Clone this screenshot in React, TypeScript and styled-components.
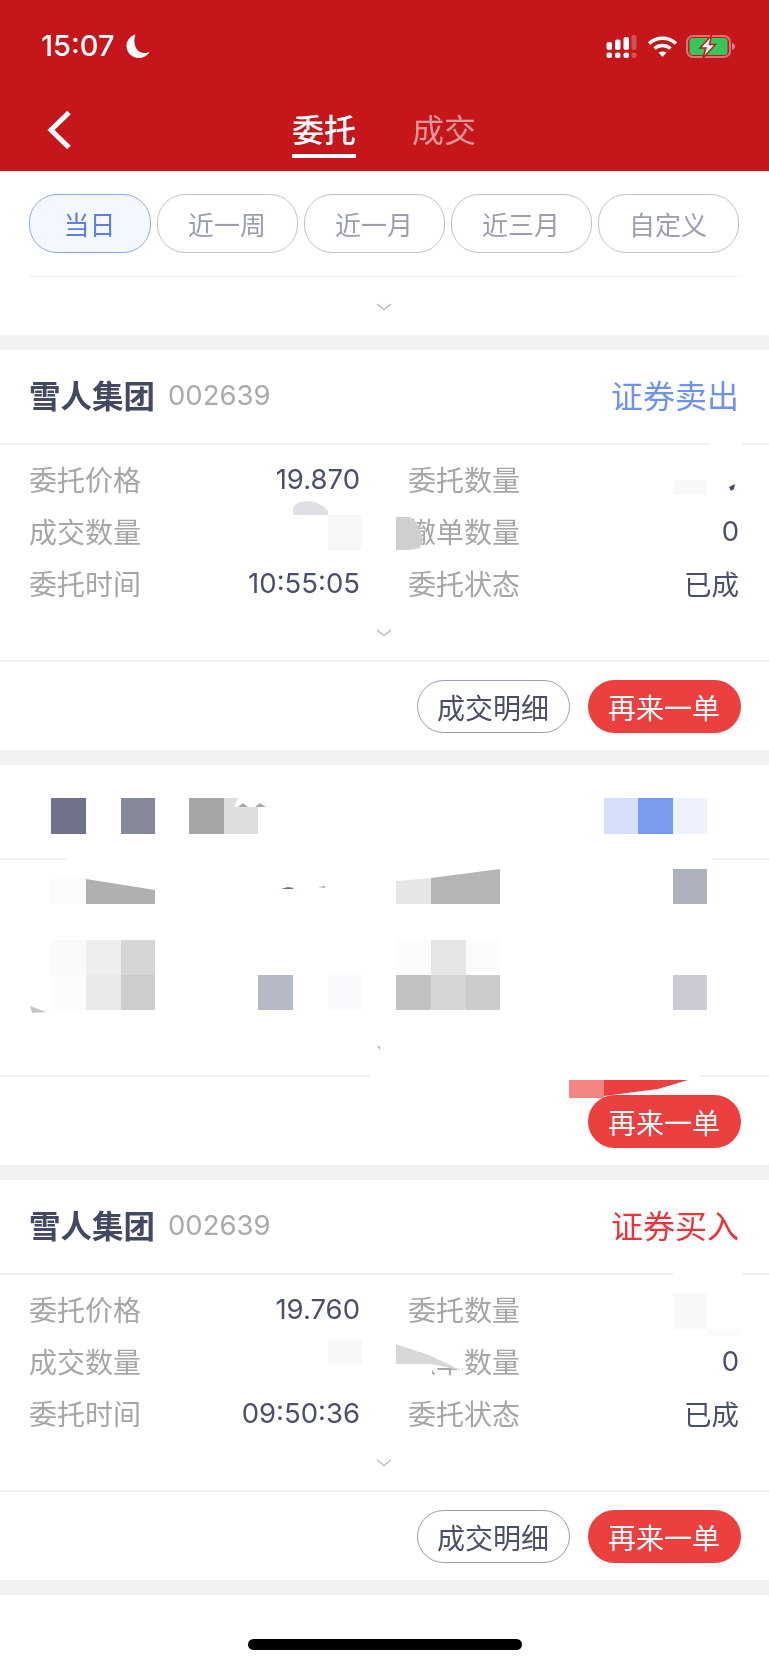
import { ReactNode } from 'react'
import styled, { createGlobalStyle } from 'styled-components'

type Patch = { x: number; y: number; w: number; h: number; c: string; r?: number }
type Shape = { points: string; c: string }

const FONT = `Inter, 'Noto Sans CJK SC', sans-serif`

const GlobalStyle = createGlobalStyle`
  html, body {
    margin: 0;
    padding: 0;
    background: #fff;
  }
  * {
    box-sizing: border-box;
  }
`

function App() {
  return (
    <>
      <GlobalStyle />
      <StPage>
        <StHeader>
          <StStatusBar>
            <StClock>
              15:07
              <MoonIcon />
            </StClock>
            <StStatusIcons>
              <SignalIcon />
              <WifiIcon />
              <BatteryIcon />
            </StStatusIcons>
          </StStatusBar>
          <StNav>
            <StBack>
              <svg width="26" height="40" viewBox="0 0 26 40" fill="none">
                <path d="M22 2.500 L4 20 L22 37.500" stroke="#fff" strokeWidth="5" />
              </svg>
            </StBack>
            <StTab $active>委托</StTab>
            <StTab>成交</StTab>
          </StNav>
        </StHeader>

        <StFilter>
          <StPills>
            <StPill $active $width={122}>当日</StPill>
            <StPill>近一周</StPill>
            <StPill>近一月</StPill>
            <StPill>近三月</StPill>
            <StPill>自定义</StPill>
          </StPills>
          <StFilterLine />
          <StFilterChevron>
            <Chevron />
          </StFilterChevron>
        </StFilter>

        <OrderCard
          top={350}
          type="证券卖出"
          typeColor="#6f93e8"
          price="19.870"
          time="10:55:05"
          patches={card1Patches}
          shapes={card1Shapes}
        />
        <OrderCard top={764} blank patches={card2Patches} shapes={card2Shapes} />
        <OrderCard
          top={1179}
          type="证券买入"
          typeColor="#e9343c"
          price="19.760"
          time="09:50:36"
          patches={card3Patches}
          shapes={card3Shapes}
        />

        <StHomeArea>
          <StHomeBar />
        </StHomeArea>
      </StPage>
    </>
  )
}

export default App

type OrderCardProps = {
  top: number
  blank?: boolean
  type?: string
  typeColor?: string
  price?: string
  time?: string
  patches: Patch[]
  shapes: Shape[]
}

const OrderCard = ({ top, blank, type, typeColor, price, time, patches, shapes }: OrderCardProps) => {
  return (
    <StCard>
      <StCardHead>
        {!blank && (
          <>
            <StName>雪人集团</StName>
            <StCode>002639</StCode>
            <StType $color={typeColor}>{type}</StType>
          </>
        )}
      </StCardHead>
      <StCardBody>
        <StGrid>
          {!blank && (
            <>
              <Field label="委托价格" value={price} />
              <Field label="委托数量" />
              <Field label="成交数量" />
              <Field label="撤单数量" value="0" />
              <Field label="委托时间" value={time} />
              <Field label="委托状态" value="已成" />
            </>
          )}
        </StGrid>
        <StBodyChevron>{!blank && <Chevron />}</StBodyChevron>
      </StCardBody>
      <StCardFoot>
        {!blank && <StOutlineButton>成交明细</StOutlineButton>}
        <StRedButton>再来一单</StRedButton>
      </StCardFoot>
      <Redaction top={top} patches={patches} shapes={shapes} />
    </StCard>
  )
}

const Field = ({ label, value }: { label: string; value?: ReactNode }) => (
  <StField>
    <StLabel>{label}</StLabel>
    <StValue>{value}</StValue>
  </StField>
)

// 打码的色块，坐标按整页算
const Redaction = ({ top, patches, shapes }: { top: number; patches: Patch[]; shapes: Shape[] }) => (
  <StRedaction viewBox={`0 ${top} 769 400`} preserveAspectRatio="none">
    {patches.map((p, i) => (
      <rect key={`p${i}`} x={p.x} y={p.y} width={p.w} height={p.h} fill={p.c} rx={p.r ?? 0} />
    ))}
    {shapes.map((s, i) => (
      <polygon key={`s${i}`} points={s.points} fill={s.c} />
    ))}
  </StRedaction>
)

const card1Patches: Patch[] = [
  { x: 710, y: 441, w: 32, h: 6, c: '#fff' },
  { x: 673, y: 480, w: 34, h: 15, c: '#f8f8fb' },
  { x: 328, y: 515, w: 34, h: 35, c: '#f7f7fa' },
  { x: 396, y: 517, w: 14, h: 33, c: '#cfcfcf' },
]
const card1Shapes: Shape[] = [
  { points: '293,515 293,507 298,503 306,501 315,502 323,506 328,511 328,515', c: '#dfdfe6' },
  { points: '410,517 416,522 420,530 423,540 420,548 410,550', c: '#cfcfcf' },
  { points: '729,487 735,484 734,489 731,491', c: '#4a4f6a' },
]

const card2Patches: Patch[] = [
  { x: 66, y: 854, w: 646, h: 8, c: '#fff' },
  { x: 370, y: 1071, w: 330, h: 8, c: '#fff' },
  { x: 51, y: 797, w: 35, h: 36, c: '#6f7288' },
  { x: 121, y: 797, w: 34, h: 36, c: '#858898' },
  { x: 189, y: 797, w: 35, h: 36, c: '#a6a6a6' },
  { x: 604, y: 797, w: 34, h: 36, c: '#d6dffa' },
  { x: 638, y: 797, w: 35, h: 36, c: '#7a9cec' },
  { x: 673, y: 797, w: 34, h: 36, c: '#eef2fe' },
  { x: 51, y: 877, w: 35, h: 26, c: '#fbfbfb' },
  { x: 673, y: 868, w: 34, h: 35, c: '#adb0bd' },
  { x: 51, y: 939, w: 35, h: 35, c: '#fafafa' },
  { x: 86, y: 939, w: 35, h: 35, c: '#eeeeee' },
  { x: 121, y: 939, w: 34, h: 35, c: '#d6d6d6' },
  { x: 396, y: 939, w: 35, h: 35, c: '#fbfbfb' },
  { x: 431, y: 939, w: 35, h: 35, c: '#e6e6e6' },
  { x: 466, y: 939, w: 34, h: 35, c: '#fbfbfb' },
  { x: 51, y: 974, w: 35, h: 35, c: '#fcfcfc' },
  { x: 86, y: 974, w: 35, h: 35, c: '#e9e9e9' },
  { x: 121, y: 974, w: 34, h: 35, c: '#cdcdcd' },
  { x: 258, y: 974, w: 35, h: 35, c: '#b6b9c6' },
  { x: 328, y: 974, w: 34, h: 35, c: '#fafafe' },
  { x: 396, y: 974, w: 35, h: 35, c: '#c2c2c2' },
  { x: 431, y: 974, w: 35, h: 35, c: '#d6d6d6' },
  { x: 466, y: 974, w: 34, h: 35, c: '#cbcbcb' },
  { x: 673, y: 974, w: 34, h: 35, c: '#cbccd3' },
  { x: 569, y: 1079, w: 35, h: 18, c: '#f48383' },
]
const card2Shapes: Shape[] = [
  { points: '224,797 238,797 234,806 258,806 258,833 224,833', c: '#dedede' },
  { points: '238,806 243,802 248,806', c: '#a8a8a8' },
  { points: '255,806 260,802 266,806', c: '#a8a8a8' },
  { points: '86,878 155,889 155,903 86,903', c: '#b0b0b0' },
  { points: '281,888 288,886 294,887 292,888', c: '#6a6e86' },
  { points: '318,886 325,885 325,887', c: '#a5a8b6' },
  { points: '396,880 431,877 431,903 396,903', c: '#e6e6e6' },
  { points: '431,877 500,868 500,903 431,903', c: '#b5b5b5' },
  { points: '30,1005 38,1008 46,1011 32,1012', c: '#c5c5c5' },
  { points: '377,1044 380,1046 380,1049', c: '#a0a0a0' },
  { points: '604,1079 688,1079 658,1088 604,1095', c: '#ec4040' },
]

const card3Patches: Patch[] = [
  { x: 673, y: 1270, w: 69, h: 8, c: '#fff' },
  { x: 673, y: 1292, w: 34, h: 36, c: '#f8f8fb' },
  { x: 707, y: 1328, w: 35, h: 7, c: '#fbfbfd' },
  { x: 328, y: 1339, w: 34, h: 24, c: '#f8f8fb' },
  { x: 396, y: 1363, w: 36, h: 16, c: '#fff' },
]
const card3Shapes: Shape[] = [
  { points: '396,1325 396,1343 431,1355 462,1370 462,1350', c: '#fff' },
  { points: '396,1343 431,1355 462,1370 432,1363 396,1363', c: '#d8d8d8' },
]

// #region icons

const MoonIcon = () => (
  <svg width="24" height="24" viewBox="0 0 24 24" fill="#fff">
    <path d="M9.500 0.500 C7 7 8.500 15 14 18 C17 19.500 21 19.500 23.500 17.500 C22 21.500 17.500 24 13 24 C6 24 0.500 18.500 0.500 12 C0.500 6.500 4.500 1.500 9.500 0.500 Z" />
  </svg>
)

const SignalIcon = () => (
  <svg width="31" height="23" viewBox="0 0 31 23" fill="#fff">
    <rect x="0.500" y="7" width="5.500" height="8" rx="2" />
    <rect x="9" y="4.500" width="5.500" height="10.500" rx="2" />
    <rect x="17.500" y="2" width="5.500" height="13" rx="2" />
    <rect x="25.500" y="0" width="5" height="15" rx="2" fillOpacity="0.25" />
    <rect x="0.500" y="17.500" width="5.500" height="5.500" rx="2" />
    <rect x="9" y="17.500" width="5.500" height="5.500" rx="2" />
    <rect x="17.500" y="17.500" width="5.500" height="5.500" rx="2" />
    <rect x="25.500" y="17.500" width="5" height="5.500" rx="2" fillOpacity="0.25" />
  </svg>
)

const WifiIcon = () => (
  <svg width="31" height="22" viewBox="0 0 31 22" fill="none" stroke="#fff" strokeWidth="3.500">
    <path d="M2 7.500 C9.500 0.500 21.500 0.500 29 7.500" />
    <path d="M7.500 12.500 C12 8.500 19 8.500 23.500 12.500" />
    <path d="M15.500 21 L11.500 16.500 C14 15 17 15 19.500 16.500 Z" fill="#fff" stroke="none" />
  </svg>
)

const BatteryIcon = () => (
  <svg width="50" height="23" viewBox="0 0 50 23" fill="none">
    <rect x="1" y="1" width="43" height="21" rx="6" stroke="#fff" strokeOpacity="0.4" strokeWidth="2" />
    <rect x="3.500" y="3" width="38" height="17" rx="3" fill="#34c759" />
    <path d="M46 8 C48 8.500 49 10 49 11.500 C49 13 48 14.500 46 15 Z" fill="#fff" fillOpacity="0.45" />
    <path d="M25.500 0.500 L14 13 L20 13 L17 23 L29.500 9.500 L23.500 9.500 Z" fill="#fff" stroke="#c4161b" strokeWidth="1.500" />
  </svg>
)

const Chevron = () => (
  <svg width="16" height="8" viewBox="0 0 16 8" fill="none">
    <path d="M1 1 L8 6.500 L15 1" stroke="#bdbdc4" strokeWidth="1.500" />
  </svg>
)

// #endregion icons

// #region styles

const StPage = styled.div`
  width: 769px;
  height: 1664px;
  overflow: hidden;
  background: #f2f2f2;
  font-family: ${FONT};
  filter: blur(0.7px);
`

const StHeader = styled.header`
  height: 171px;
  background: #c4161b;
  color: #fff;
`

const StStatusBar = styled.div`
  height: 92px;
  padding: 26px 33px 0 41px;
  display: flex;
  justify-content: space-between;
  align-items: flex-start;
`

const StClock = styled.div`
  display: flex;
  align-items: center;
  gap: 12px;
  font-size: 29px;
  font-weight: 500;
  line-height: 40px;
`

const StStatusIcons = styled.div`
  display: flex;
  align-items: center;
  gap: 10px;
  padding-top: 9px;

  & > svg:nth-child(3) {
    margin-left: -2px;
  }
`

const StNav = styled.nav`
  position: relative;
  height: 79px;
  padding-left: 292px;
  display: flex;
  gap: 56px;
`

const StBack = styled.div`
  position: absolute;
  left: 47px;
  top: 18px;
  line-height: 0;
`

const StTab = styled.div<{ $active?: boolean }>`
  position: relative;
  width: 64px;
  height: 66px;
  padding-top: 19px;
  font-size: 32px;
  line-height: 40px;
  white-space: nowrap;
  font-weight: ${(p) => (p.$active ? 500 : 400)};
  color: ${(p) => (p.$active ? '#fff' : 'rgba(255, 255, 255, 0.55)')};
  border-bottom: ${(p) => (p.$active ? '4px solid #fff' : '0')};
`

const StFilter = styled.section`
  height: 164px;
  margin-bottom: 15px;
  padding: 23px 29px 0 28.500px;
  background: #fff;
`

const StPills = styled.div`
  display: flex;
  gap: 6px;
`

const StPill = styled.div<{ $active?: boolean; $width?: number }>`
  width: ${(p) => p.$width ?? 141}px;
  height: 59px;
  display: flex;
  align-items: center;
  justify-content: center;
  border-radius: 28px;
  font-size: 26px;
  border: 1.5px solid ${(p) => (p.$active ? '#8ba9f1' : '#c0c3ce')};
  background: ${(p) => (p.$active ? '#f5f7fe' : '#fff')};
  color: ${(p) => (p.$active ? '#5f80e2' : '#9b9eac')};
`

const StFilterLine = styled.div`
  height: 1px;
  margin-top: 23px;
  background: #f0f0f2;
`

const StFilterChevron = styled.div`
  display: flex;
  justify-content: center;
  padding-top: 26px;
  line-height: 0;
`

const StCard = styled.section`
  position: relative;
  height: 400px;
  margin-bottom: 15px;
  background: #fff;
`

const StCardHead = styled.div`
  height: 95px;
  padding: 0 30px 5px 29px;
  display: flex;
  align-items: center;
  border-bottom: 2px solid #f1f1f3;
`

const StName = styled.div`
  font-size: 31.500px;
  font-weight: 700;
  color: #444962;
`

const StCode = styled.div`
  margin: 2px 0 0 13px;
  font-size: 27.500px;
  color: #aaaaaa;
`

const StType = styled.div<{ $color?: string }>`
  margin-left: auto;
  font-size: 32px;
  color: ${(p) => p.$color};
`

const StCardBody = styled.div`
  height: 217px;
  padding: 8px 29.500px 0 29px;
  border-bottom: 2px solid #f1f1f3;
`

const StGrid = styled.div`
  height: 156px;
  display: grid;
  grid-template-columns: 331px 331px;
  grid-auto-rows: 52px;
  column-gap: 48px;
`

const StField = styled.div`
  display: flex;
  align-items: center;
  justify-content: space-between;
  font-size: 28px;
`

const StLabel = styled.div`
  color: #a6a6a6;
`

const StValue = styled.div`
  font-size: 27.500px;
  color: #4b5069;
`

const StBodyChevron = styled.div`
  display: flex;
  justify-content: center;
  padding-top: 20px;
  height: 30px;
  line-height: 0;
`

const StCardFoot = styled.div`
  padding: 18px 28.500px 0 29px;
  display: flex;
  justify-content: flex-end;
  gap: 18px;
`

const StActionButton = styled.div`
  width: 153px;
  height: 53px;
  display: flex;
  align-items: center;
  justify-content: center;
  border-radius: 27px;
  font-size: 28px;
`

const StOutlineButton = styled(StActionButton)`
  border: 1.5px solid #9a9db0;
  color: #4b5069;
`

const StRedButton = styled(StActionButton)`
  background: #ec4040;
  color: #fff;
`

const StRedaction = styled.svg`
  position: absolute;
  inset: 0;
  width: 100%;
  height: 100%;
  pointer-events: none;
`

const StHomeArea = styled.div`
  height: 70px;
  padding-top: 44px;
  background: #fff;
  display: flex;
  justify-content: center;
`

const StHomeBar = styled.div`
  width: 274px;
  height: 11px;
  border-radius: 6px;
  background: #000;
`

// #endregion styles
